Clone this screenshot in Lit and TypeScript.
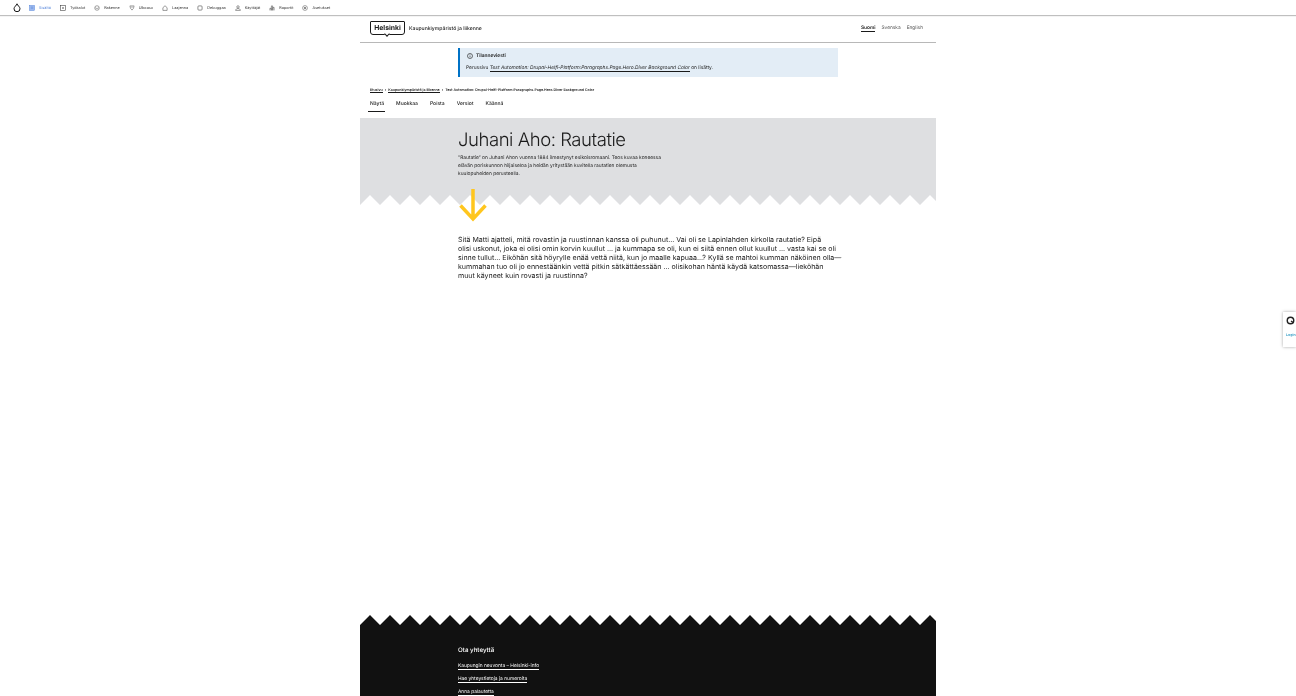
import { LitElement, html, css, svg } from 'lit';
import { customElement } from 'lit/decorators.js';

const toolIcons: Record<string, unknown> = {
  content: svg`<rect x="1" y="1" width="8" height="8" fill="#9db9ee" stroke="#4a7dd8" stroke-width=".8"/><path d="M3 3.5h4M3 5.5h4" stroke="#4a7dd8" stroke-width=".7"/>`,
  tools: svg`<rect x="1" y="1" width="8" height="8" fill="none" stroke="#333" stroke-width=".9"/><path d="M3.5 5h3M5 3.5v3" stroke="#333" stroke-width=".9"/>`,
  structure: svg`<circle cx="5" cy="5" r="3.8" fill="none" stroke="#555" stroke-width=".9"/><path d="M2 4.5l3 1.6 3-1.6" fill="none" stroke="#555" stroke-width=".8"/>`,
  look: svg`<path d="M1.5 1.5h7l-1 4-2.5 3-2.5-3z" fill="none" stroke="#555" stroke-width=".9"/><path d="M3 3.5h4" stroke="#555" stroke-width=".7"/>`,
  extend: svg`<path d="M1.5 9V4.5L5 1.2l3.500 3.300V9z" fill="none" stroke="#444" stroke-width=".9"/>`,
  debug: svg`<rect x="1.500" y="1.500" width="7" height="7" rx="1.500" fill="none" stroke="#333" stroke-width=".9"/>`,
  users: svg`<circle cx="5" cy="3.200" r="2" fill="none" stroke="#444" stroke-width=".9"/><path d="M1 9c.5-2.500 2-3 4-3s3.500.5 4 3z" fill="none" stroke="#444" stroke-width=".9"/>`,
  reports: svg`<path d="M1.500 9V5.500h2V9M4 9V1.500h2V9M6.500 9V4h2v5" fill="none" stroke="#444" stroke-width=".9"/>`,
  settings: svg`<circle cx="5" cy="5" r="4" fill="none" stroke="#555" stroke-width=".9"/><circle cx="5" cy="5" r="1.500" fill="#555"/>`,
};

const toolItems = [
  { icon: 'content', label: 'Sisältö', active: true },
  { icon: 'tools', label: 'Työkalut' },
  { icon: 'structure', label: 'Rakenne' },
  { icon: 'look', label: 'Ulkoasu' },
  { icon: 'extend', label: 'Laajenna' },
  { icon: 'debug', label: 'Debuggaa' },
  { icon: 'users', label: 'Käyttäjät' },
  { icon: 'reports', label: 'Raportit' },
  { icon: 'settings', label: 'Asetukset' },
];

const tabs = ['Näytä', 'Muokkaa', 'Poista', 'Versiot', 'Käännä'];
const footerLinks = ['Kaupungin neuvonta – Helsinki-info', 'Hae yhteystietoja ja numeroita', 'Anna palautetta'];
const pageTitle = 'Test Automation: Drupal-Helfi-Platform:Paragraphs.Page.Hero.Diver Background Color';

const bodyLines = [
  'Sitä Matti ajatteli, mitä rovastin ja ruustinnan kanssa oli puhunut... Vai oli se Lapinlahden kirkolla rautatie? Eipä',
  'olisi uskonut, joka ei olisi omin korvin kuullut ... ja kummapa se oli, kun ei siitä ennen ollut kuullut ... vasta kai se oli',
  'sinne tullut... Eiköhän sitä höyrylle enää vettä niitä, kun jo maalle kapuaa...? Kyllä se mahtoi kumman näköinen olla—',
  'kummahan tuo oli jo ennestäänkin vettä pitkin sätkättäessään ... olisikohan häntä käydä katsomassa—lieköhän',
  'muut käyneet kuin rovasti ja ruustinna?',
];

@customElement('app-root')
export class AppRoot extends LitElement {
  static override styles = css`
    :host {
      display: block;
      height: 696px;
      overflow: hidden;
      position: relative;
      background: #fff;
      color: #1a1a1a;
      font-family: Inter, 'Liberation Sans', sans-serif;
      text-rendering: geometricPrecision;
    }

    a {
      color: inherit;
      text-decoration: none;
    }

    .page {
      display: flex;
      flex-direction: column;
      height: 696px;
      will-change: transform;
    }

    .toolbar {
      flex: none;
      height: 15px;
      display: flex;
      align-items: center;
      padding-left: 13px;
      box-shadow: 0 1px 1px rgba(0, 0, 0, 0.25);
      font-size: 3.8px;
      color: #333;
    }

    .drop {
      width: 8px;
      height: 9px;
      margin-right: 8px;
    }

    .tool {
      display: flex;
      align-items: center;
      gap: 4px;
      margin-right: 9px;
    }

    .tool svg {
      width: 6px;
      height: 6px;
    }

    .tool.active {
      color: #4a7dd8;
    }

    .shell {
      flex: 1;
      width: 576px;
      margin: 0 auto;
      display: flex;
      flex-direction: column;
    }

    .header {
      height: 28px;
      flex: none;
      display: flex;
      align-items: center;
      justify-content: space-between;
      padding: 0 13px 0 10px;
      border-bottom: 1px solid #b8b8b8;
      box-sizing: border-box;
    }

    .brand {
      display: flex;
      align-items: center;
      gap: 4px;
      font-size: 5.1px;
      font-weight: 500;
    }

    .logo {
      position: relative;
      width: 35px;
      height: 14px;
      margin-bottom: 2px;
      box-sizing: border-box;
      border: 1px solid #1a1a1a;
      border-radius: 1px 1px 3px 3px;
      font-size: 6.8px;
      font-weight: 700;
      display: flex;
      align-items: center;
      justify-content: center;
      padding-bottom: 1px;
    }

    .logo::after {
      content: '';
      position: absolute;
      left: 14px;
      bottom: -2.5px;
      width: 3px;
      height: 3px;
      background: #fff;
      border-right: 1px solid #1a1a1a;
      border-bottom: 1px solid #1a1a1a;
      transform: rotate(45deg);
    }

    .langs {
      display: flex;
      gap: 6px;
      font-size: 4.8px;
      color: #555;
    }

    .langs .current {
      color: #1a1a1a;
      font-weight: 600;
      border-bottom: 1px solid #1a1a1a;
    }

    .status {
      flex: none;
      width: 380px;
      height: 29px;
      box-sizing: border-box;
      margin: 5px 0 0 98px;
      padding: 5px 0 0 6px;
      background: #e3edf6;
      border-left: 2px solid #0072c6;
      font-size: 4.85px;
    }

    .status-title {
      display: flex;
      align-items: center;
      gap: 3px;
      font-weight: 600;
      margin-bottom: 6px;
      height: 6px;
      padding-left: 1px;
    }

    .status-title svg {
      width: 6px;
      height: 6px;
    }

    .status-text a {
      font-style: italic;
      border-bottom: 1px solid #1a1a1a;
    }

    .crumbs {
      flex: none;
      margin: 10px 0 0 10px;
      font-size: 3.55px;
      font-weight: 600;
      display: flex;
      gap: 2px;
      height: 6px;
      align-items: center;
    }

    .crumbs a {
      border-bottom: 1px solid #1a1a1a;
    }

    .tabs {
      flex: none;
      display: flex;
      gap: 12px;
      margin: 5px 0 0 10px;
      font-size: 5px;
      font-weight: 500;
      height: 16px;
    }

    .tab {
      position: relative;
      padding-top: 3px;
    }

    .tab.active::after {
      content: '';
      position: absolute;
      left: -2px;
      right: -1px;
      top: 13px;
      height: 1px;
      background: #1a1a1a;
    }

    .hero {
      flex: none;
      position: relative;
      height: 77px;
      margin-top: 4px;
      background: #dedfe1;
      padding-left: 98px;
    }

    .hero h1 {
      margin: 0;
      padding-top: 12px;
      font-size: 18.5px;
      font-weight: 300;
      letter-spacing: -0.45px;
      line-height: 20px;
    }

    .hero p {
      margin: 4px 0 0;
      width: 208px;
      font-size: 4.85px;
      line-height: 8px;
    }

    .zigzag {
      display: block;
      width: 576px;
      height: 10px;
      flex: none;
    }

    .zigzag.on-hero {
      background: #dedfe1;
    }

    .arrow {
      position: absolute;
      left: 98px;
      top: 70px;
      width: 30px;
      height: 34px;
    }

    .body-text {
      flex: 1;
      margin: 30px 0 0 98px;
      font-size: 7.05px;
      line-height: 9px;
      white-space: nowrap;
    }

    .footer {
      flex: none;
      height: 71px;
      background: #111;
      color: #fff;
      padding: 21px 0 0 98px;
      box-sizing: border-box;
      font-size: 4.85px;
    }

    .footer h2 {
      margin: 0 0 7px;
      font-size: 6.2px;
      font-weight: 500;
      line-height: 10px;
    }

    .footer a {
      display: table;
      margin-bottom: 6px;
      line-height: 6px;
      border-bottom: 1px solid #fff;
    }

    .widget {
      position: absolute;
      top: 312px;
      right: 0;
      width: 13px;
      height: 35px;
      overflow: hidden;
      background: #fff;
      box-shadow: 0 0 3px rgba(0, 0, 0, 0.35);
      box-sizing: border-box;
      padding: 4px 0 0 3px;
      color: #2e9ac4;
      font-size: 3.6px;
      font-weight: 600;
    }

    .widget svg {
      display: block;
      width: 9px;
      height: 9px;
      margin-bottom: 8px;
    }
  `;

  private zigzag(fill: string, cls = '') {
    // one tooth every 20px across the shell
    let d = 'M0 10';
    for (let x = 0; x < 576; x += 20) {
      d += ` L${x + 10} 0 L${x + 20} 10`;
    }
    d += ' Z';
    return html`<svg class="zigzag ${cls}" viewBox="0 0 576 10"><path d=${d} fill=${fill}></path></svg>`;
  }

  override render() {
    return html`
      <div class="page">
        <nav class="toolbar">
          <svg class="drop" viewBox="0 0 8 9"><path d="M4 .8C3.600 2.400 1 3.800 1 5.800a3 2.900 0 0 0 6 0C7 3.800 4.400 2.400 4 .8z" fill="none" stroke="#111" stroke-width="1"/></svg>
          ${toolItems.map(t => html`
            <a class="tool ${t.active ? 'active' : ''}">
              <svg viewBox="0 0 10 10">${toolIcons[t.icon]}</svg>
              <span>${t.label}</span>
            </a>
          `)}
        </nav>
        <div class="shell">
          <header class="header">
            <div class="brand">
              <div class="logo">Helsinki</div>
              <span>Kaupunkiympäristö ja liikenne</span>
            </div>
            <div class="langs">
              <span class="current">Suomi</span>
              <span>Svenska</span>
              <span>English</span>
            </div>
          </header>
          <div class="status">
            <div class="status-title">
              <svg viewBox="0 0 10 10"><circle cx="5" cy="5" r="4.200" fill="none" stroke="#1a1a1a" stroke-width="1"/><path d="M5 4.300v3M5 2.500v1" stroke="#1a1a1a" stroke-width="1"/></svg>
              Tilanneviesti
            </div>
            <div class="status-text">Perussivu <a>${pageTitle}</a> on lisätty.</div>
          </div>
          <div class="crumbs">
            <a>Etusivu</a><span>›</span><a>Kaupunkiympäristö ja liikenne</a><span>›</span><span>${pageTitle}</span>
          </div>
          <div class="tabs">
            ${tabs.map((t, i) => html`<a class="tab ${i === 0 ? 'active' : ''}">${t}</a>`)}
          </div>
          <section class="hero">
            <h1>Juhani Aho: Rautatie</h1>
            <p>”Rautatie” on Juhani Ahon vuonna 1884 ilmestynyt esikoisromaani. Teos kuvaa koneessa elävän poriskunnon hiljaiseloa ja heidän yritystään kuvitella rautatien olemusta kuulopuheiden perusteella.</p>
            <svg class="arrow" viewBox="0 0 30 34"><path d="M15 1V31M2.500 17.500L15 31 27.500 17.500" fill="none" stroke="#ffc61e" stroke-width="3.500"/></svg>
          </section>
          ${this.zigzag('#fff', 'on-hero')}
          <p class="body-text">${bodyLines.map(l => html`${l}<br />`)}</p>
          ${this.zigzag('#111')}
          <footer class="footer">
            <h2>Ota yhteyttä</h2>
            ${footerLinks.map(l => html`<a>${l}</a>`)}
          </footer>
        </div>
      </div>
      <aside class="widget">
        <svg viewBox="0 0 10 10"><circle cx="5" cy="5" r="3.600" fill="none" stroke="#222" stroke-width="1.600"/><path d="M5.500 5.500l3 2" stroke="#222" stroke-width="1.400"/></svg>
        Login
      </aside>
    `;
  }
}

declare global {
  interface HTMLElementTagNameMap {
    'app-root': AppRoot;
  }
}
